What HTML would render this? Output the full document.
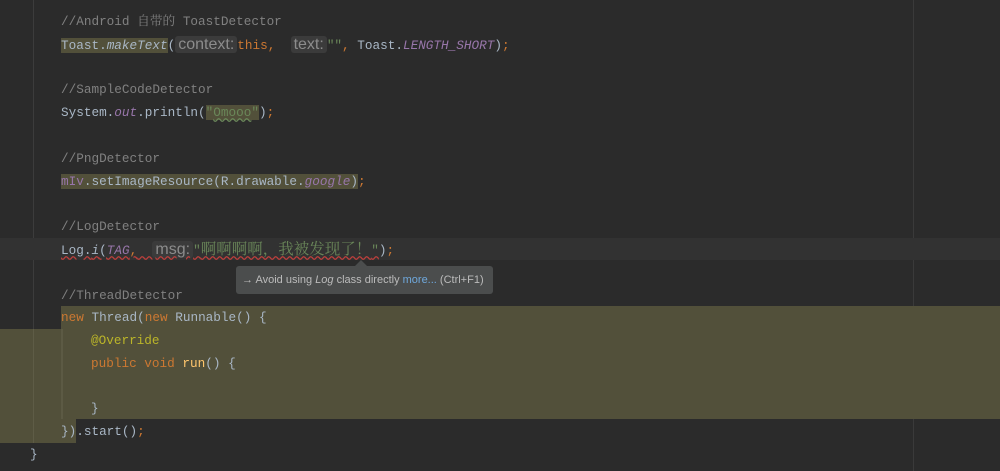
<!DOCTYPE html>
<html><head><meta charset="utf-8"><style>
body{margin:0;width:1000px;height:471px;background:#2b2b2b;overflow:hidden;position:relative;font-family:"Liberation Mono","Noto Serif CJK SC",monospace;font-size:12.7px;color:#a9b7c6}
.l{position:absolute;left:61px;height:22px;line-height:22px;white-space:pre}
.c{color:#808080}.k{color:#cc7832}.s{color:#6a8759}.p{color:#9876aa;font-style:italic}.i{font-style:italic}
.h{position:absolute;background:#52503a}
.hint{background:#3b3b3b;color:#8c8c8c;font-family:"Liberation Sans",sans-serif;font-size:16px;border-radius:3px;padding:0 3px}
</style></head><body>
<div style="position:absolute;left:33px;top:0;width:1px;height:443px;background:#3c3c3c"></div>
<div style="position:absolute;left:913px;top:0;width:1px;height:471px;background:#3a3a3a"></div>
<div style="position:absolute;left:0;top:238px;width:1000px;height:22px;background:#323232"></div>
<div class="h" style="left:61px;top:306px;width:939px;height:23px"></div>
<div class="h" style="left:0;top:329px;width:1000px;height:90px"></div>
<div class="h" style="left:0;top:419px;width:76px;height:24px"></div>
<div style="position:absolute;left:61px;top:329px;width:2px;height:90px;background:#5c5a44"></div>
<div style="position:absolute;left:33px;top:329px;width:1px;height:114px;background:#5e5c46"></div>

<div class="l c" style="top:11px">//Android 自带的 ToastDetector</div>
<div class="l" style="top:34px"><span style="background:#52503a">Toast.<span class="i">makeText</span></span>(<span class="hint">context:</span><span class="k">this, </span> <span class="hint">text:</span><span class="s">""</span><span class="k">,</span> Toast.<span class="p">LENGTH_SHORT</span>)<span class="k">;</span></div>
<div class="l c" style="top:79px">//SampleCodeDetector</div>
<div class="l" style="top:102px">System.<span class="p">out</span>.println(<span class="s" style="background:#52503a">"<u style="text-decoration-style:wavy;text-decoration-color:#6a8759">Omooo</u>"</span>)<span class="k">;</span></div>
<div class="l c" style="top:148px">//PngDetector</div>
<div class="l" style="top:171px"><span style="background:#52503a"><span style="color:#9876aa">mIv</span>.setImageResource(R.drawable.<span class="p">google</span>)</span><span class="k">;</span></div>
<div class="l c" style="top:216px">//LogDetector</div>
<div class="l" style="top:239px"><span style="text-decoration:underline wavy #bc3f3c">Log.<span class="i">i</span>(<span class="p">TAG</span><span class="k">,</span>  <span class="hint">msg:</span><span class="s">"<span style="font-size:15.5px">啊啊啊啊，我被发现了！</span>"</span></span>)<span class="k">;</span></div>
<div class="l c" style="top:285px">//ThreadDetector</div>
<div class="l" style="top:307px"><span class="k">new</span> Thread(<span class="k">new</span> Runnable() {</div>
<div class="l" style="top:330px;left:91px;color:#bbb529">@Override</div>
<div class="l" style="top:353px;left:91px"><span class="k">public void</span> <span style="color:#ffc66d">run</span>() {</div>
<div class="l" style="top:398px;left:91px">}</div>
<div class="l" style="top:421px">}).start()<span class="k">;</span></div>
<div class="l" style="top:444px;left:30px">}</div>

<div style="position:absolute;left:355px;top:260px;width:0;height:0;border-left:6px solid transparent;border-right:6px solid transparent;border-bottom:6px solid #4b4d4d"></div>
<div style="position:absolute;left:236px;top:266px;width:257px;height:28px;background:#4b4d4d;border-radius:3px;color:#bbbbbb;font-family:'Liberation Sans',sans-serif;font-size:11px;line-height:28px;text-indent:6px;white-space:nowrap">→ Avoid using <i>Log</i> class directly <span style="color:#6fa8dc">more...</span> (Ctrl+F1)</div>
</body></html>
